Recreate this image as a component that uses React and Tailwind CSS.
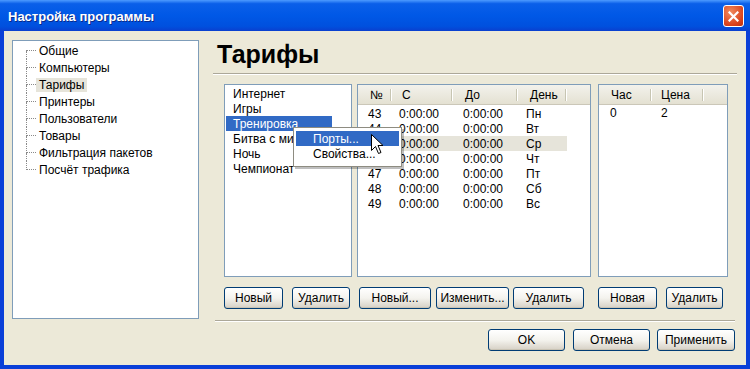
import React from "react";

const FONT = { fontFamily: '"Liberation Sans", Arial, sans-serif' };

const treeItems = [
  "Общие",
  "Компьютеры",
  "Тарифы",
  "Принтеры",
  "Пользователи",
  "Товары",
  "Фильтрация пакетов",
  "Посчёт трафика",
];

const tariffs = ["Интернет", "Игры", "Тренировка", "Битва с мини", "Ночь", "Чемпионат"];

const days = [
  ["43", "Пн"],
  ["44", "Вт"],
  ["45", "Ср"],
  ["46", "Чт"],
  ["47", "Пт"],
  ["48", "Сб"],
  ["49", "Вс"],
];

const XpButton = ({ children, className = "" }) => (
  <button
    className={`h-[22px] rounded-[3px] border border-[#003c74] bg-gradient-to-b from-[#ffffff] via-[#f4f3ee] to-[#d6d0c5] text-[12px] text-black leading-none shadow-[inset_0_-1px_0_#c9c3b4] ${className}`}
  >
    {children}
  </button>
);

const HeaderCell = ({ w, pl, children }) => (
  <div className={`${w} ${pl} h-full flex items-center relative shrink-0`}>
    {children}
    <span className="absolute right-0 top-[4px] h-[12px] w-[2px] border-l border-[#c7c5b2] border-r border-r-white" />
  </div>
);

const CloseIcon = () => (
  <svg width="11" height="11" viewBox="0 0 11 11">
    <path d="M1.5 1.5 L9.5 9.5 M9.5 1.5 L1.5 9.5" stroke="white" strokeWidth="2.2" strokeLinecap="square" />
  </svg>
);

const Cursor = () => (
  <svg width="13" height="21" viewBox="0 0 13 21" className="absolute left-[159px] top-[50px]">
    <path
      d="M0.5 0.5 L0.5 16.5 L4.5 12.5 L7.5 19.5 L10 18.5 L7 11.5 L12 11.5 Z"
      fill="white"
      stroke="black"
      strokeWidth="1"
      strokeLinejoin="miter"
    />
  </svg>
);

export default function App() {
  return (
    <div style={FONT} className="w-[750px] h-[369px] flex flex-col bg-[#0a3fd8] overflow-hidden select-none">
      {/* title bar */}
      <div className="h-[31px] shrink-0 flex items-center justify-between pl-[8px] pr-[6px] bg-[linear-gradient(180deg,#4d9bff_0%,#0a5fe9_12%,#0058e6_50%,#0050de_85%,#0a3fcf_100%)]">
        <span className="text-white font-bold text-[13px] pt-[3px] [text-shadow:1px_1px_0_#0a2a8a]">
          Настройка программы
        </span>
        <div className="w-[21px] h-[22px] mt-[1px] rounded-[3px] border border-white bg-[radial-gradient(circle_at_35%_30%,#f08a5e,#d9411b_70%,#b8300f)] flex items-center justify-center">
          <CloseIcon />
        </div>
      </div>

      {/* body */}
      <div className="flex-1 mx-[4px] mb-[4px] bg-[#ece9d8] flex text-[12px] text-black">
        {/* tree */}
        <div className="ml-[8px] mt-[9px] w-[187px] h-[279px] border border-[#7f9db9] bg-white pt-[1px]">
          {treeItems.map((item, i) => (
            <div key={item} className="h-[17px] flex items-stretch">
              <div className="ml-[13px] w-[10px] flex flex-col">
                <div
                  className={`flex-1 border-b border-dotted border-b-[#8a8a8a] ${
                    i === 0 ? "" : "border-l border-l-[#8a8a8a]"
                  }`}
                />
                <div className={`flex-1 ${i === treeItems.length - 1 ? "" : "border-l border-dotted border-l-[#8a8a8a]"}`} />
              </div>
              <div className="flex items-center">
                <span className={`h-[14px] px-[3px] flex items-center ${item === "Тарифы" ? "bg-[#e6e4da]" : ""}`}>
                  {item}
                </span>
              </div>
            </div>
          ))}
        </div>

        {/* right side */}
        <div className="ml-[13px] mt-[9px] w-[525px] flex flex-col">
          <div className="mt-[2px] h-[25px] pl-[5px] text-[25px] font-bold leading-[25px]">Тарифы</div>
          <div className="mt-[6px] ml-[1px] h-[2px] border-t border-[#aca899] border-b border-b-white" />

          {/* panels */}
          <div className="mt-[9px] pl-[12px] flex relative">
            {/* tariff list */}
            <div className="w-[128px] h-[193px] border border-[#7f9db9] bg-white pt-[1px]">
              {tariffs.map((t) => (
                <div
                  key={t}
                  className={`h-[15px] ml-[1px] w-[106px] pl-[7px] flex items-center whitespace-nowrap ${
                    t === "Тренировка" ? "bg-[#316ac5] text-white" : ""
                  }`}
                >
                  {t}
                </div>
              ))}
            </div>

            {/* days table */}
            <div className="ml-[5px] w-[234px] h-[193px] border border-[#7f9db9] bg-white">
              <div className="h-[20px] flex bg-gradient-to-b from-[#f3f2ec] to-[#e4e1d2] border-b border-[#cbc7b8]">
                <HeaderCell w="w-[34px]" pl="pl-[12px]">№</HeaderCell>
                <HeaderCell w="w-[61px]" pl="pl-[10px]">С</HeaderCell>
                <HeaderCell w="w-[65px]" pl="pl-[12px]">До</HeaderCell>
                <HeaderCell w="w-[49px]" pl="pl-[12px]">День</HeaderCell>
              </div>
              <div className="pt-[1px]">
                {days.map(([n, d]) => (
                  <div key={n} className={`h-[15px] flex items-center w-[209px] ${d === "Ср" ? "bg-[#e6e4da]" : ""}`}>
                    <span className="w-[34px] pl-[10px] shrink-0">{n}</span>
                    <span className="w-[61px] pl-[7px] shrink-0">0:00:00</span>
                    <span className="w-[65px] pl-[10px] shrink-0">0:00:00</span>
                    <span className="w-[49px] pl-[8px] shrink-0">{d}</span>
                  </div>
                ))}
              </div>
            </div>

            {/* hours table */}
            <div className="ml-[7px] w-[130px] h-[193px] border border-[#7f9db9] bg-white">
              <div className="h-[20px] flex bg-gradient-to-b from-[#f3f2ec] to-[#e4e1d2] border-b border-[#cbc7b8]">
                <HeaderCell w="w-[53px]" pl="pl-[12px]">Час</HeaderCell>
                <HeaderCell w="w-[52px]" pl="pl-[9px]">Цена</HeaderCell>
              </div>
              <div className="pt-[1px] h-[15px] flex items-center">
                <span className="w-[53px] pl-[11px]">0</span>
                <span className="pl-[9px]">2</span>
              </div>
            </div>

            {/* context menu */}
            <div className="absolute left-[81px] top-[43px] w-[109px] h-[40px] border border-[#8e8c81] bg-white pt-[3px] px-[2px] shadow-[2px_2px_0_rgba(0,0,0,0.25)]">
              <div className="h-[15px] pl-[17px] flex items-center bg-[#316ac5] text-white">Порты...</div>
              <div className="h-[15px] pl-[17px] flex items-center">Свойства...</div>
            </div>
            <Cursor />
          </div>

          {/* panel buttons */}
          <div className="mt-[10px] pl-[12px] flex">
            <XpButton className="w-[59px]">Новый</XpButton>
            <XpButton className="w-[58px] ml-[9px]">Удалить</XpButton>
            <XpButton className="w-[72px] ml-[9px]">Новый...</XpButton>
            <XpButton className="w-[73px] ml-[5px]">Изменить...</XpButton>
            <XpButton className="w-[71px] ml-[4px]">Удалить</XpButton>
            <XpButton className="w-[59px] ml-[14px]">Новая</XpButton>
            <XpButton className="w-[57px] ml-[9px]">Удалить</XpButton>
          </div>

          <div className="mt-[11px] ml-[3px] mr-[2px] h-[2px] border-t border-[#aca899] border-b border-b-white" />

          {/* dialog buttons */}
          <div className="mt-[7px] pr-[2px] flex justify-end">
            <XpButton className="w-[77px]">OK</XpButton>
            <XpButton className="w-[77px] ml-[8px]">Отмена</XpButton>
            <XpButton className="w-[78px] ml-[7px]">Применить</XpButton>
          </div>
        </div>
      </div>
    </div>
  );
}
